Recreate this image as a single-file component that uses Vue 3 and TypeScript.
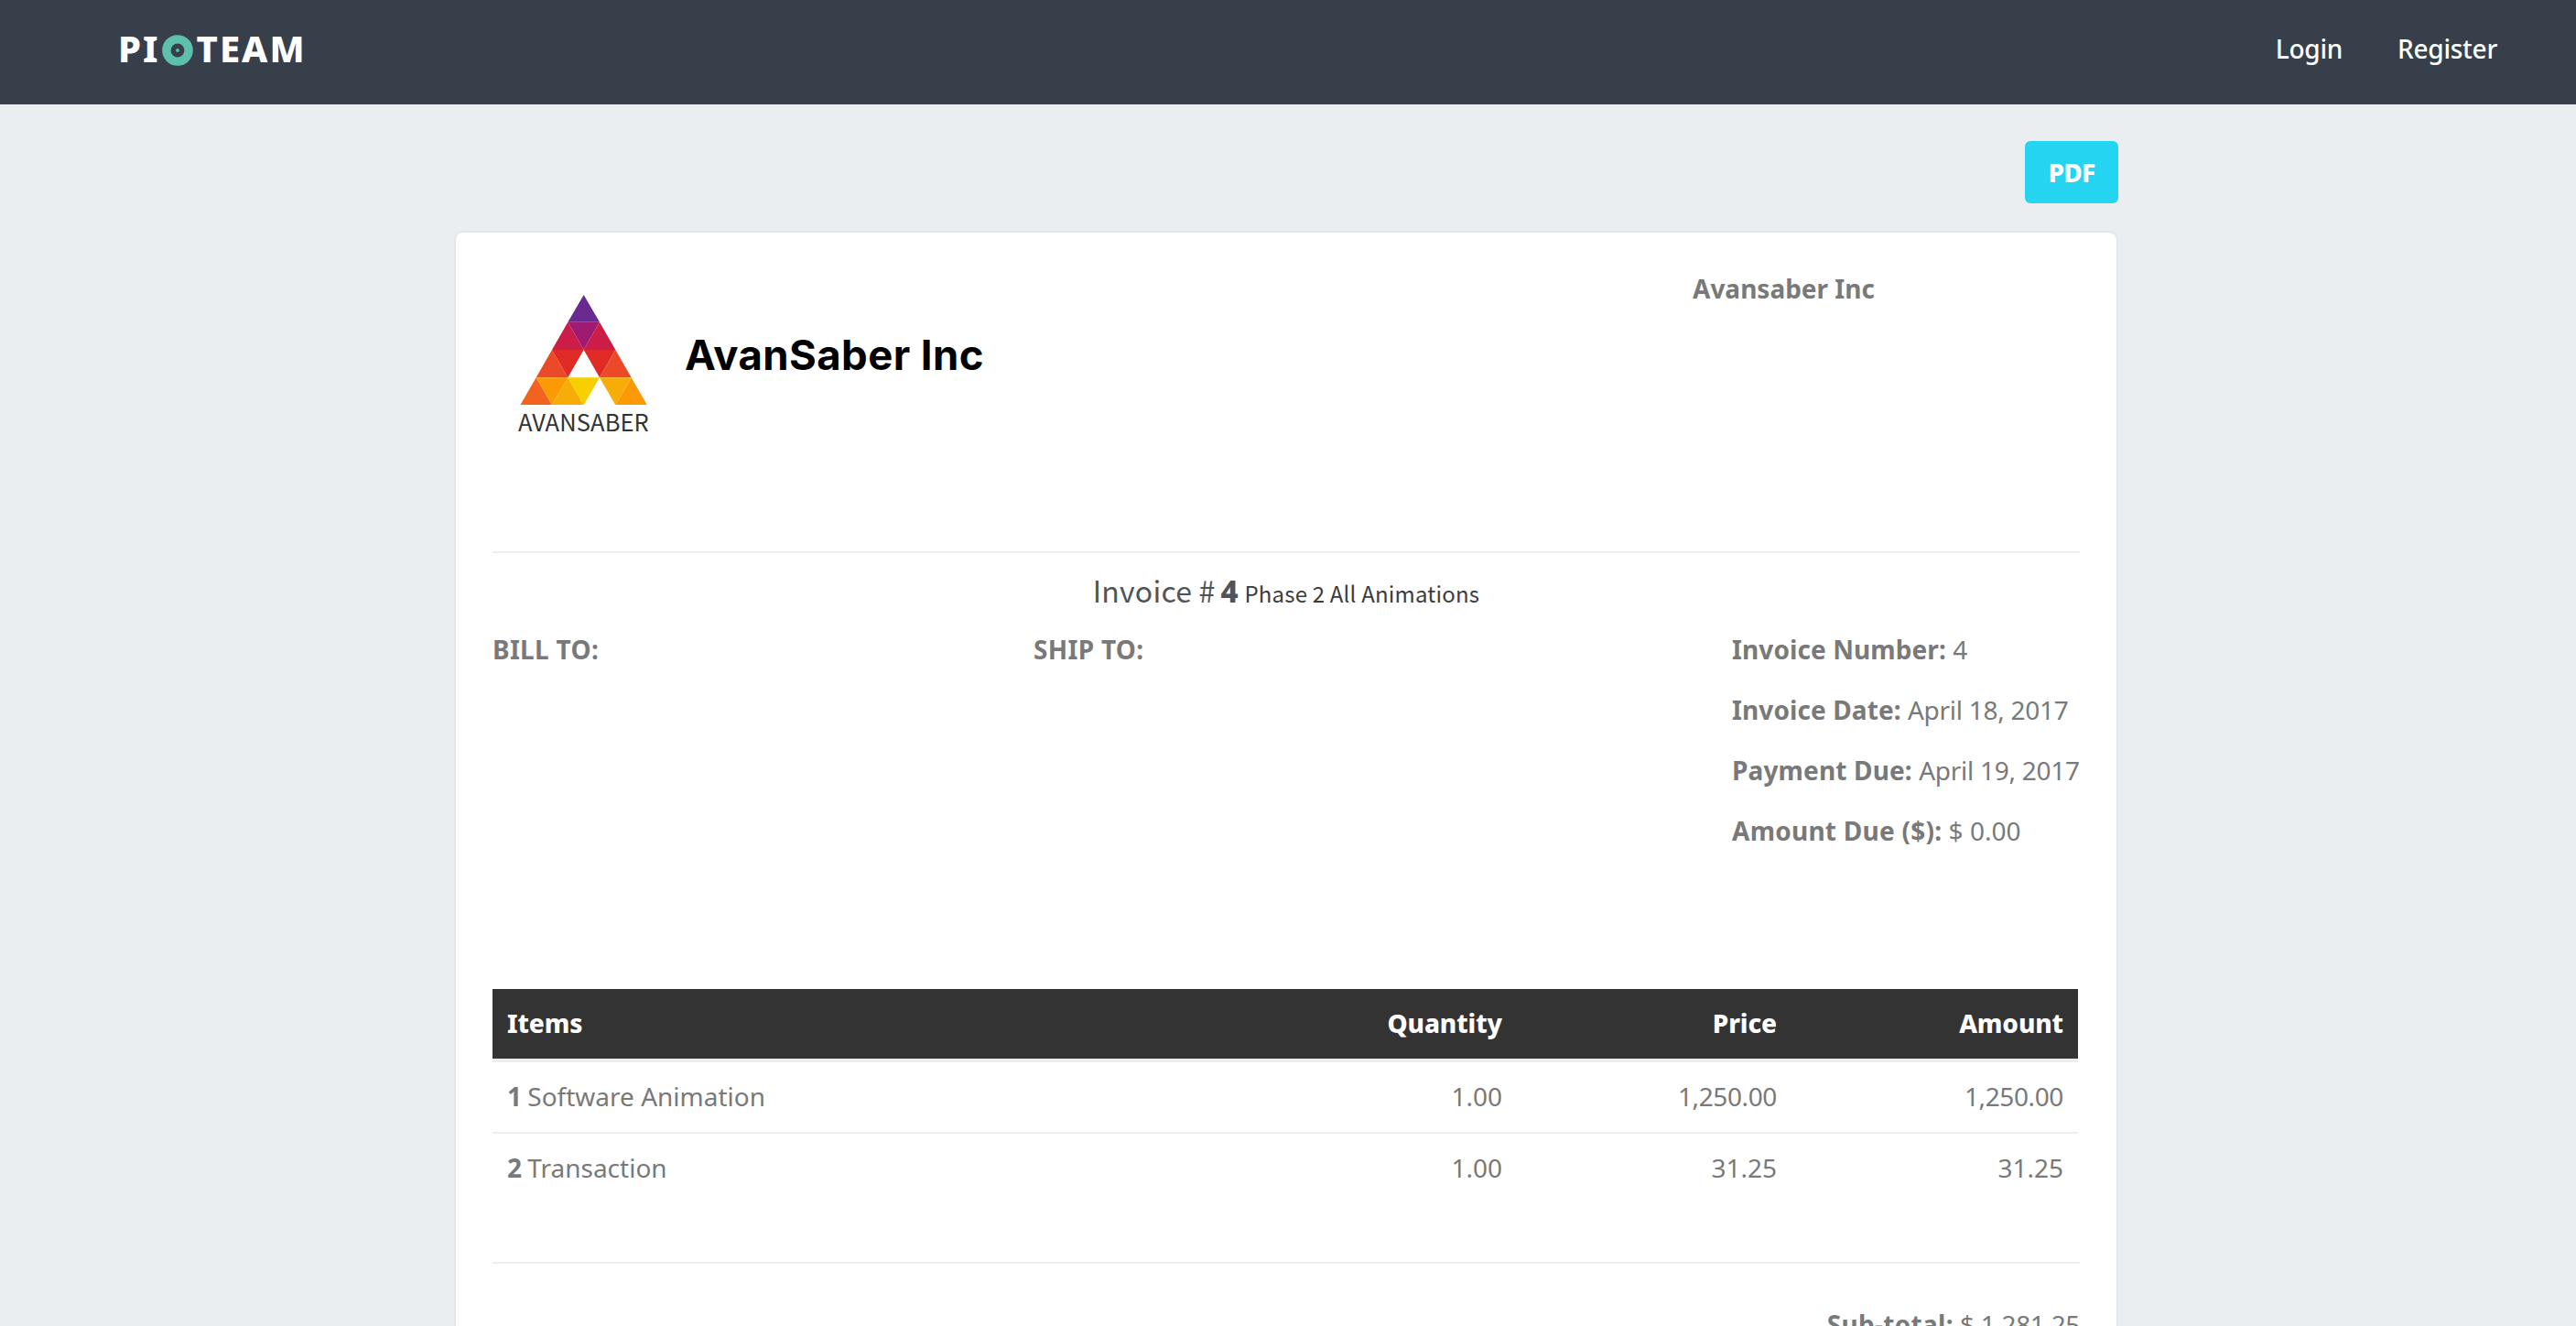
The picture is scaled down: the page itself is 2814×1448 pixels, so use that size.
<script setup lang="ts">
interface Field {
  key: string
  label: string
  value: string
}

interface LineItem {
  name: string
  quantity: string
  price: string
  amount: string
}

const fields: Field[] = [
  { key: 'number', label: 'Invoice Number:', value: '4' },
  { key: 'date', label: 'Invoice Date:', value: 'April 18, 2017' },
  { key: 'due', label: 'Payment Due:', value: 'April 19, 2017' },
  { key: 'amount', label: 'Amount Due ($):', value: '$ 0.00' },
]

const items: LineItem[] = [
  { name: 'Software Animation', quantity: '1.00', price: '1,250.00', amount: '1,250.00' },
  { name: 'Transaction', quantity: '1.00', price: '31.25', amount: '31.25' },
]

const triangles: { points: string; fill: string }[] = [
  { points: '473,247 525,336 421,336', fill: '#6a2b91' },
  { points: '421,336 473,427 369,427', fill: '#cc1c48' },
  { points: '421,336 525,336 473,427', fill: '#9f1b71' },
  { points: '525,336 577,427 473,427', fill: '#cc1c48' },
  { points: '369,427 421,518 317,518', fill: '#ea4a28' },
  { points: '369,427 473,427 421,518', fill: '#df2a25' },
  { points: '473,427 577,427 525,518', fill: '#df2a25' },
  { points: '577,427 629,518 525,518', fill: '#ea4a28' },
  { points: '317,518 369,608 265,608', fill: '#f3621f' },
  { points: '317,518 421,518 369,608', fill: '#fb9a05' },
  { points: '421,518 473,608 369,608', fill: '#f7ad08' },
  { points: '421,518 525,518 473,608', fill: '#f8d000' },
  { points: '525,518 629,518 577,608', fill: '#f7ad08' },
  { points: '629,518 681,608 577,608', fill: '#fb9a05' },
]
</script>

<template>
  <div class="page">
    <nav class="navbar">
      <div class="brand">
        <span>PI</span>
        <svg class="ring" viewBox="0 0 34 34" width="34" height="34" aria-hidden="true">
          <circle cx="17" cy="17" r="12.1" fill="none" stroke="#5ebfac" stroke-width="9.4" />
          <circle cx="17" cy="17" r="1.9" fill="#5ebfac" />
        </svg>
        <span>TEAM</span>
      </div>
      <div class="links">
        <a class="login">Login</a>
        <a>Register</a>
      </div>
    </nav>

    <main class="container">
      <div class="actions"><button class="pdf" type="button">PDF</button></div>

      <section class="card">
        <header class="head">
          <div class="logo">
            <svg viewBox="261 247 426 361" width="142" height="120.33" aria-hidden="true">
              <polygon v-for="t in triangles" :key="t.points" :points="t.points" :fill="t.fill" />
            </svg>
            <span class="logo-name">AVANSABER</span>
          </div>
          <h1 class="title">AvanSaber Inc</h1>
          <strong class="company">Avansaber Inc</strong>
        </header>

        <div class="subject">
          <span class="subject-label">Invoice #</span>
          <b class="subject-no">4</b>
          <span class="subject-text">Phase 2 All Animations</span>
        </div>

        <div class="meta">
          <strong class="bill">BILL TO:</strong>
          <strong class="ship">SHIP TO:</strong>
          <div class="fields">
            <div v-for="f in fields" :key="f.key" :class="['field', f.key]">
              <strong>{{ f.label }}</strong> <span>{{ f.value }}</span>
            </div>
          </div>
        </div>

        <table class="items">
          <colgroup>
            <col class="c-item" /><col class="c-qty" /><col class="c-price" /><col class="c-amount" />
          </colgroup>
          <thead>
            <tr>
              <th>Items</th>
              <th>Quantity</th>
              <th>Price</th>
              <th>Amount</th>
            </tr>
          </thead>
          <tbody>
            <tr v-for="(item, i) in items" :key="item.name">
              <td><strong class="row-no">{{ i + 1 }}</strong> {{ item.name }}</td>
              <td>{{ item.quantity }}</td>
              <td><span :class="{ long: item.price.length > 6 }">{{ item.price }}</span></td>
              <td><span :class="{ long: item.amount.length > 6 }">{{ item.amount }}</span></td>
            </tr>
          </tbody>
        </table>

        <div class="totals">
          <div class="total"><strong>Sub-total:</strong> <span>$ 1,281.25</span></div>
        </div>
      </section>
    </main>
  </div>
</template>

<style>
body {
  margin: 0;
  background: #eaeef1;
}
</style>

<style scoped>
.page {
  height: 1448px;
  overflow: hidden;
  background: #eaeef1;
  color: #797979;
  font: 400 28px/40px "Noto Sans", sans-serif;
}

.navbar {
  box-sizing: border-box;
  display: flex;
  justify-content: space-between;
  align-items: center;
  height: 114px;
  padding: 0 86px 8px 129px;
  background: #37404a;
  color: #fff;
}
.brand {
  display: flex;
  align-items: center;
  font-size: 40px;
  font-weight: 800;
  line-height: 54px;
  letter-spacing: 2px;
}
.ring {
  margin: 3px 4px 0 2px;
}
.links {
  display: flex;
  gap: 60px;
  font-weight: 500;
  letter-spacing: -0.25px;
}

.container {
  width: 1818px;
  margin-left: 496px;
}
.actions {
  display: flex;
  justify-content: flex-end;
  padding: 40px 0 30px;
}
.pdf {
  box-sizing: border-box;
  width: 102px;
  height: 68px;
  padding: 0 0 1px;
  border: 0;
  border-radius: 6px;
  background: #25d4f0;
  color: #fff;
  font: 800 28px/40px "Noto Sans", sans-serif;
  letter-spacing: -0.8px;
}

.card {
  box-sizing: border-box;
  height: 1400px;
  padding: 0 40px;
  border: 2px solid #e3e7ea;
  border-radius: 10px;
  background: #fff;
}
.head {
  box-sizing: border-box;
  display: flex;
  align-items: flex-start;
  height: 350px;
  border-bottom: 2px solid #ededee;
}
.logo {
  display: flex;
  flex-direction: column;
  width: 142px;
  margin: 68px 0 0 29px;
}
.logo svg {
  display: block;
}
.logo-name {
  margin: 3px 0 0 -1px;
  color: #333;
  font: 400 25.5px/30px "Noto Sans CJK SC", sans-serif;
  letter-spacing: 0.1px;
  white-space: nowrap;
}
.title {
  margin: 104px 0 0 39px;
  color: #000;
  font: 700 45.5px/60px Inter, sans-serif;
  letter-spacing: 0.4px;
}
.company {
  width: 423px;
  margin: 41px 0 0 auto;
}

.subject {
  display: flex;
  justify-content: center;
  align-items: baseline;
  height: 40px;
  margin-top: 20px;
  color: #505458;
  font: 400 32px/40px "Noto Sans CJK SC", sans-serif;
}
.subject-label {
  letter-spacing: 0.2px;
}
.subject-no {
  margin: 0 7px 0 6px;
  font: 800 33px/40px "Noto Sans", sans-serif;
}
.subject-text {
  color: #3c3c3e;
  font-size: 24px;
  letter-spacing: 0.18px;
}

.meta {
  display: grid;
  grid-template-columns: 591px 763px 380px;
  margin-top: 12px;
  line-height: 66px;
}
.fields {
  white-space: nowrap;
}
.bill {
  letter-spacing: 0.3px;
}
.ship {
  letter-spacing: 0.3px;
}
.number strong {
  letter-spacing: 0.1px;
}
.date strong {
  letter-spacing: 0.1px;
}
.due strong {
  letter-spacing: 0.15px;
}
.amount strong {
  letter-spacing: 0.25px;
}
.date span,
.due span {
  letter-spacing: -0.27px;
}

.items {
  width: 1732px;
  margin-top: 140px;
  border-collapse: separate;
  border-spacing: 0;
  table-layout: fixed;
}
.c-item {
  width: 879px;
}
.c-qty {
  width: 240px;
}
.c-price {
  width: 300px;
}
.c-amount {
  width: 313px;
}
th,
td {
  padding: 0 16px 2px;
  line-height: 74px;
  text-align: right;
}
th:first-child,
td:first-child {
  text-align: left;
}
th {
  border-bottom: 4px solid #eaeef0;
  background: #333;
  background-clip: padding-box;
  color: #fff;
  font-weight: 800;
  letter-spacing: -0.1px;
}
tbody tr + tr td {
  border-top: 2px solid #ebeeef;
}
.row-no {
  margin-right: -1px;
}
.long {
  letter-spacing: -0.38px;
}

.totals {
  margin-top: 64px;
  padding-top: 46px;
  border-top: 2px solid #ededee;
  text-align: right;
}
.total strong {
  letter-spacing: 0.3px;
}
.total span {
  letter-spacing: -0.35px;
}
</style>
